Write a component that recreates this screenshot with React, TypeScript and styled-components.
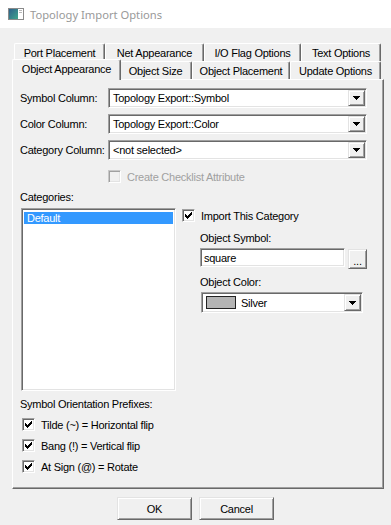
import styled, { createGlobalStyle, css } from 'styled-components';

const GlobalStyle = createGlobalStyle`
  html, body {
    margin: 0;
    padding: 0;
    background: #f0f0f0;
  }
  body {
    font-family: 'Liberation Sans', Arial, sans-serif;
    font-size: 11px;
    letter-spacing: -0.25px;
    color: #000;
  }
`;

const sunken = css`
    box-sizing: border-box;
    border: 1px solid;
    border-color: #a0a0a0 #fff #fff #a0a0a0;
    box-shadow: inset 1px 1px #696969, inset -1px -1px #e3e3e3;
`;

const raised = css`
    box-sizing: border-box;
    background: #f0f0f0;
    border: 1px solid;
    border-color: #e3e3e3 #696969 #696969 #e3e3e3;
    box-shadow: inset 1px 1px #fff, inset -1px -1px #a0a0a0;
`;

const Window = styled.div`
    width: 391px;
    height: 525px;
    display: flex;
    flex-direction: column;
    overflow: hidden;
`;

const TitleBar = styled.div`
    height: 28px;
    flex: none;
    background: #fff;
    display: flex;
    align-items: center;
    gap: 6px;
    padding-left: 8px;
    font-family: 'Noto Sans', 'Open Sans', sans-serif;
    font-size: 11.2px;
    letter-spacing: 0;
    color: #999;
`;

const Body = styled.div`
    flex: 1;
    display: flex;
    flex-direction: column;
    padding-top: 15px;
`;

const TabArea = styled.div`
    padding-left: 12px;
`;

const TabStrip = styled.div`
    padding-left: 2px;
`;

const TabRow = styled.div`
    display: flex;
`;

const Tab = styled.div<{ $w: number; $active?: boolean }>`
    box-sizing: border-box;
    width: ${(p) => p.$w}px;
    height: 18px;
    display: flex;
    align-items: center;
    justify-content: center;
    white-space: nowrap;
    background: #f0f0f0;
    border-top: 1px solid #fff;
    border-left: 1px solid #fff;
    border-right: 1px solid #696969;
    box-shadow: inset -1px 0 #a0a0a0;
    border-radius: 2px 2px 0 0;

    ${(p) =>
        p.$active &&
        css`
            width: ${p.$w + 4}px;
            height: 21px;
            margin: -2px -2px -1px -2px;
            padding-bottom: 3px;
            position: relative;
            z-index: 1;
        `}
`;

const Pane = styled.div`
    box-sizing: border-box;
    width: 372px;
    height: 410px;
    border: 1px solid;
    border-color: #fff #696969 #696969 #fff;
    box-shadow: inset -1px -1px #a0a0a0;
    padding: 8px 16px 0 7px;
    display: flex;
    flex-direction: column;
`;

const FieldGrid = styled.div`
    display: grid;
    grid-template-columns: 88px 259px;
    row-gap: 6px;
    align-items: center;
`;

const Combo = styled.div<{ $w?: number; $h?: number }>`
    ${sunken};
    width: ${(p) => (p.$w ? `${p.$w}px` : 'auto')};
    height: ${(p) => p.$h ?? 20}px;
    background: #fff;
    display: flex;
    align-items: center;
    justify-content: space-between;
    padding: 1px 1px 1px 4px;
    white-space: nowrap;
`;

const ComboValue = styled.span`
    display: flex;
    align-items: center;
    gap: 5px;
`;

const DropButton = styled.span`
    ${raised};
    width: 17px;
    height: 100%;
    display: flex;
    align-items: center;
    justify-content: center;
    flex: none;
`;

const CheckRow = styled.div<{ $indent?: number; $disabled?: boolean; $top?: number }>`
    display: flex;
    align-items: center;
    gap: 6px;
    height: 13px;
    margin-left: ${(p) => p.$indent ?? 0}px;
    margin-top: ${(p) => p.$top ?? 0}px;
    color: ${(p) => (p.$disabled ? '#a0a0a0' : '#000')};
    white-space: nowrap;
`;

const Box = styled.span<{ $disabled?: boolean }>`
    ${sunken};
    width: 13px;
    height: 13px;
    flex: none;
    background: ${(p) => (p.$disabled ? '#f0f0f0' : '#fff')};
    border-color: ${(p) => (p.$disabled ? '#c8c8c8 #fff #fff #c8c8c8' : '#a0a0a0 #fff #fff #a0a0a0')};
    box-shadow: ${(p) =>
        p.$disabled ? 'inset 1px 1px #a0a0a0, inset -1px -1px #e3e3e3' : 'inset 1px 1px #696969, inset -1px -1px #e3e3e3'};
    display: flex;
    padding: 1px;

    svg {
        flex: none;
        display: block;
    }
`;

const Label = styled.div<{ $top?: number }>`
    margin-top: ${(p) => p.$top ?? 0}px;
    line-height: 13px;
    white-space: nowrap;
`;

const Split = styled.div`
    display: flex;
    margin-top: 4px;
`;

const ListBox = styled.div`
    ${sunken};
    width: 157px;
    height: 183px;
    margin-left: 1px;
    background: #fff;
    padding: 3px 2px 0;
`;

const ListItem = styled.div<{ $selected?: boolean }>`
    height: 12px;
    line-height: 12px;
    padding-left: 3px;
    background: ${(p) => (p.$selected ? '#3399ff' : 'transparent')};
    color: ${(p) => (p.$selected ? '#fff' : '#000')};
`;

const SideColumn = styled.div`
    display: flex;
    flex-direction: column;
    margin-left: 6px;
    padding-top: 1px;
`;

const SubFields = styled.div`
    display: flex;
    flex-direction: column;
    padding-left: 18px;
`;

const InputRow = styled.div`
    display: flex;
    gap: 3px;
    margin-top: 3px;
`;

const TextBox = styled.div`
    ${sunken};
    width: 145px;
    height: 19px;
    background: #fff;
    padding-left: 3px;
    display: flex;
    align-items: center;
`;

const DotsButton = styled.div`
    ${raised};
    width: 19px;
    height: 20px;
    margin-top: 1px;
    display: flex;
    align-items: flex-end;
    justify-content: center;
    padding-bottom: 3px;
    line-height: 8px;
`;

const Swatch = styled.span<{ $color: string }>`
    display: inline-block;
    box-sizing: border-box;
    width: 30px;
    height: 13px;
    background: ${(p) => p.$color};
    border: 1px solid #222;
`;

const ColorCombo = styled(Combo)`
    margin-top: 3px;
    margin-left: 1px;
    padding-left: 4px;
`;

const CheckList = styled.div`
    display: flex;
    flex-direction: column;
    gap: 8px;
    margin-top: 7px;
    padding-left: 2px;
`;

const Footer = styled.div`
    display: flex;
    justify-content: center;
    gap: 7px;
    margin-top: 8px;
`;

const PushButton = styled.button`
    ${raised};
    width: 75px;
    height: 23px;
    padding: 0;
    font: inherit;
    letter-spacing: inherit;
    color: #000;
`;

const CheckMark = () => {
    // classic 7x7 tick, three pixels tall per column
    const tops = [2, 3, 4, 3, 2, 1, 0];
    return (
        <svg width="9" height="9" viewBox="0 0 9 9" shapeRendering="crispEdges">
            {tops.map((t, c) => (
                <rect key={c} x={1 + c} y={1 + t} width="1" height="3" fill="#000" />
            ))}
        </svg>
    );
};

const Arrow = () => (
    <svg width="7" height="4" viewBox="0 0 7 4" shapeRendering="crispEdges">
        <rect x="0" y="0" width="7" height="1" fill="#000" />
        <rect x="1" y="1" width="5" height="1" fill="#000" />
        <rect x="2" y="2" width="3" height="1" fill="#000" />
        <rect x="3" y="3" width="1" height="1" fill="#000" />
    </svg>
);

const AppIcon = () => (
    <svg width="16" height="12" viewBox="0 0 16 12">
        <defs>
            <linearGradient id="pane" x1="0" y1="0" x2="1" y2="1">
                <stop offset="0%" stopColor="#2f5f8a" />
                <stop offset="100%" stopColor="#3fa58c" />
            </linearGradient>
        </defs>
        <rect x="0.5" y="0.5" width="15" height="11" fill="#fff" stroke="#8a8a8a" />
        <rect x="1" y="1" width="9" height="10" fill="url(#pane)" />
        <rect x="11" y="2" width="3" height="1" fill="#b8b8b8" />
        <rect x="11" y="4" width="3" height="1" fill="#b8b8b8" />
    </svg>
);

const Check = ({ checked, disabled }: { checked?: boolean; disabled?: boolean }) => (
    <Box $disabled={disabled}>{checked && <CheckMark />}</Box>
);

const Select = ({ value }: { value: string }) => (
    <Combo>
        <span>{value}</span>
        <DropButton>
            <Arrow />
        </DropButton>
    </Combo>
);

const App = () => {
    return (
        <Window>
            <GlobalStyle />
            <TitleBar>
                <AppIcon />
                <span>Topology Import Options</span>
            </TitleBar>
            <Body>
                <TabArea>
                    <TabStrip>
                        <TabRow>
                            <Tab $w={91}>Port Placement</Tab>
                            <Tab $w={99}>Net Appearance</Tab>
                            <Tab $w={97}>I/O Flag Options</Tab>
                            <Tab $w={80}>Text Options</Tab>
                        </TabRow>
                        <TabRow>
                            <Tab $w={105} $active>
                                Object Appearance
                            </Tab>
                            <Tab $w={73}>Object Size</Tab>
                            <Tab $w={98}>Object Placement</Tab>
                            <Tab $w={91}>Update Options</Tab>
                        </TabRow>
                    </TabStrip>
                    <Pane>
                        <FieldGrid>
                            <Label>Symbol Column:</Label>
                            <Select value="Topology Export::Symbol" />
                            <Label>Color Column:</Label>
                            <Select value="Topology Export::Color" />
                            <Label>Category Column:</Label>
                            <Select value="<not selected>" />
                        </FieldGrid>
                        <CheckRow $indent={88} $top={10} $disabled>
                            <Check disabled />
                            <span>Create Checklist Attribute</span>
                        </CheckRow>
                        <Label $top={8}>Categories:</Label>
                        <Split>
                            <ListBox>
                                <ListItem $selected>Default</ListItem>
                            </ListBox>
                            <SideColumn>
                                <CheckRow>
                                    <Check checked />
                                    <span>Import This Category</span>
                                </CheckRow>
                                <SubFields>
                                    <Label $top={10}>Object Symbol:</Label>
                                    <InputRow>
                                        <TextBox>square</TextBox>
                                        <DotsButton>...</DotsButton>
                                    </InputRow>
                                    <Label $top={7}>Object Color:</Label>
                                    <ColorCombo $w={162} $h={21}>
                                        <ComboValue>
                                            <Swatch $color="#b4b4b4" />
                                            <span>Silver</span>
                                        </ComboValue>
                                        <DropButton>
                                            <Arrow />
                                        </DropButton>
                                    </ColorCombo>
                                </SubFields>
                            </SideColumn>
                        </Split>
                        <Label $top={7}>Symbol Orientation Prefixes:</Label>
                        <CheckList>
                            <CheckRow>
                                <Check checked />
                                <span>Tilde (~) = Horizontal flip</span>
                            </CheckRow>
                            <CheckRow>
                                <Check checked />
                                <span>Bang (!) = Vertical flip</span>
                            </CheckRow>
                            <CheckRow>
                                <Check checked />
                                <span>At Sign (@) = Rotate</span>
                            </CheckRow>
                        </CheckList>
                    </Pane>
                </TabArea>
                <Footer>
                    <PushButton>OK</PushButton>
                    <PushButton>Cancel</PushButton>
                </Footer>
            </Body>
        </Window>
    );
};

export default App;
